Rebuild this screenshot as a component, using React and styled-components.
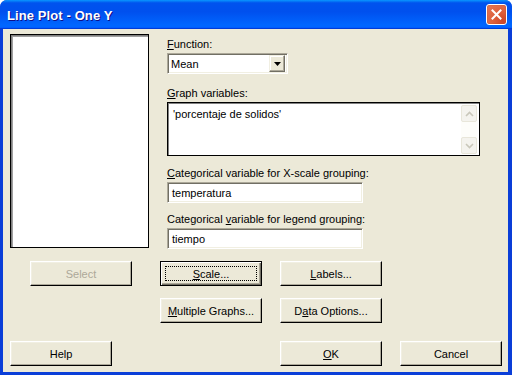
import React from 'react';
import styled, { createGlobalStyle } from 'styled-components';

const GlobalStyle = createGlobalStyle`
  html, body {
    margin: 0;
    padding: 0;
    background: #ffffff;
  }
  body {
    font-family: "Liberation Sans", Arial, sans-serif;
    font-size: 11px;
    color: #000;
  }
`;

const Window = styled.div`
  width: 512px;
  height: 375px;
  box-sizing: border-box;
  display: flex;
  flex-direction: column;
  background: #0a3ed8;
  border-radius: 7px 7px 0 0;
  overflow: hidden;
`;

const TitleBar = styled.div`
  height: 29px;
  flex: none;
  display: flex;
  align-items: center;
  justify-content: space-between;
  padding: 0 5px 0 7px;
  background: linear-gradient(180deg, #0997ff 0%, #0053ee 10%, #0050ee 40%, #0066ff 86%, #0066ff 92%, #005bff 95%, #003dd7 97%, #003dd7 100%);
`;

const Title = styled.span`
  font-family: "Liberation Sans", Arial, sans-serif;
  font-weight: bold;
  font-size: 13px;
  color: #ffffff;
  text-shadow: 1px 1px #0f1089;
  letter-spacing: 0.1px;
  margin-top: 1px;
`;

const CloseButton = styled.div`
  width: 19px;
  height: 19px;
  border: 1px solid #ffffff;
  border-radius: 3px;
  display: flex;
  align-items: center;
  justify-content: center;
  background: radial-gradient(circle at 85% 85%, #cc4628 0%, #dd5e3a 40%, #e37a58 100%);
  box-shadow: inset 0 0 1px #8e2a10;
`;

const Client = styled.div`
  flex: 1;
  margin: 0 4px 3px 3px;
  background: #ece9d8;
  padding: 5px 0 0 7px;
  display: flex;
  flex-direction: column;
`;

const Top = styled.div`
  display: flex;
  gap: 18px;
`;

const ListBox = styled.div`
  width: 139px;
  height: 214px;
  box-sizing: border-box;
  background: #fff;
  border: 1px solid #000;
  box-shadow: inset 1px 1px 0 #808080, inset 2px 2px 0 #a0a0a0;
`;

const Fields = styled.div`
  display: flex;
  flex-direction: column;
  padding-top: 4px;
`;

const Label = styled.div`
  height: 13px;
  line-height: 13px;
  margin-top: ${p => p.$mt || 0}px;
  margin-bottom: 2px;
  white-space: nowrap;
`;

const Key = styled.span`
  text-decoration: underline;
  text-underline-offset: 1px;
`;

const Sunken = styled.div`
  box-sizing: border-box;
  background: #fff;
  border-style: solid;
  border-width: 1px;
  border-color: #aca899 #ffffff #ffffff #aca899;
  box-shadow: inset 1px 1px 0 #716f64, inset -1px -1px 0 #f1efe2;
`;

const Select = styled(Sunken)`
  width: 121px;
  height: 21px;
  display: flex;
  align-items: center;
  justify-content: space-between;
  padding: 0 2px 0 3px;
`;

const ArrowBtn = styled.div`
  width: 16px;
  height: 17px;
  box-sizing: border-box;
  background: #ece9d8;
  border-style: solid;
  border-width: 1px;
  border-color: #f1efe2 #716f64 #716f64 #f1efe2;
  box-shadow: inset -1px -1px 0 #aca899, inset 1px 1px 0 #ffffff;
  display: flex;
  align-items: center;
  justify-content: center;
`;

const TextArea = styled.div`
  width: 313px;
  height: 54px;
  box-sizing: border-box;
  background: #fff;
  border: 1px solid #000;
  box-shadow: inset 1px 1px 0 #808080;
  display: flex;
  justify-content: space-between;
  padding: 2px 2px 1px 5px;
`;

const AreaText = styled.div`
  padding-top: 3px;
  line-height: 13px;
`;

const ScrollBar = styled.div`
  width: 16px;
  display: flex;
  flex-direction: column;
  justify-content: space-between;
  background: #fdfdfa;
`;

const ScrollBtn = styled.div`
  width: 16px;
  height: 17px;
  box-sizing: border-box;
  border: 1px solid #e8e6da;
  border-radius: 2px;
  background: #f4f3ee;
  display: flex;
  align-items: center;
  justify-content: center;
`;

const Input = styled(Sunken)`
  width: 196px;
  height: 21px;
  padding: 0 4px;
  display: flex;
  align-items: center;
`;

const ButtonRow = styled.div`
  display: flex;
  margin-top: ${p => p.$mt}px;
`;

const Button = styled.div`
  width: 102px;
  height: 25px;
  margin-left: ${p => p.$ml || 0}px;
  box-sizing: border-box;
  display: flex;
  align-items: center;
  justify-content: center;
  background: #ece9d8;
  color: ${p => (p.$disabled ? '#aca899' : '#000')};
  border-style: solid;
  border-width: 1px;
  border-color: ${p => (p.$default ? '#000' : '#ffffff #000 #000 #ffffff')};
  box-shadow: ${p =>
    p.$default
      ? 'inset 1px 1px 0 #ffffff, inset -1px -1px 0 #716f64, inset -2px -2px 0 #aca899'
      : 'inset -1px -1px 0 #aca899, inset 1px 1px 0 #f1efe2'};
  position: relative;
`;

const Focus = styled.span`
  position: absolute;
  left: 4px;
  right: 4px;
  top: 4px;
  bottom: 4px;
  border: 1px dotted #000;
`;

const Chevron = ({ up }) => (
  <svg width="9" height="6" viewBox="0 0 9 6">
    <path
      d={up ? 'M1 5 L4.5 1.5 L8 5' : 'M1 1 L4.5 4.5 L8 1'}
      fill="none"
      stroke="#c9c7ba"
      strokeWidth="1.6"
    />
  </svg>
);

export default function App() {
  return (
    <>
      <GlobalStyle />
      <Window>
        <TitleBar>
          <Title>Line Plot - One Y</Title>
          <CloseButton>
            <svg width="11" height="11" viewBox="0 0 11 11">
              <path d="M1.5 1.5 L9.5 9.5 M9.5 1.5 L1.5 9.5" stroke="#fff" strokeWidth="2" strokeLinecap="square" />
            </svg>
          </CloseButton>
        </TitleBar>
        <Client>
          <Top>
            <ListBox />
            <Fields>
              <Label><Key>F</Key>unction:</Label>
              <Select>
                <span>Mean</span>
                <ArrowBtn>
                  <svg width="7" height="4" viewBox="0 0 7 4">
                    <path d="M0 0 H7 L3.5 4 Z" fill="#000" />
                  </svg>
                </ArrowBtn>
              </Select>
              <Label $mt={13}><Key>G</Key>raph variables:</Label>
              <TextArea>
                <AreaText>'porcentaje de solidos'</AreaText>
                <ScrollBar>
                  <ScrollBtn><Chevron up /></ScrollBtn>
                  <ScrollBtn><Chevron /></ScrollBtn>
                </ScrollBar>
              </TextArea>
              <Label $mt={11}><Key>C</Key>ategorical variable for X-scale grouping:</Label>
              <Input>temperatura</Input>
              <Label $mt={10}>Categorical <Key>v</Key>ariable for legend grouping:</Label>
              <Input>tiempo</Input>
            </Fields>
          </Top>
          <ButtonRow $mt={12}>
            <Button $disabled $ml={20}>Select</Button>
            <Button $default $ml={28}>
              <Focus />
              <span><Key>S</Key>cale...</span>
            </Button>
            <Button $ml={18}><span><Key>L</Key>abels...</span></Button>
          </ButtonRow>
          <ButtonRow $mt={12}>
            <Button $ml={150}><span><Key>M</Key>ultiple Graphs...</span></Button>
            <Button $ml={18}><span>D<Key>a</Key>ta Options...</span></Button>
          </ButtonRow>
          <ButtonRow $mt={18}>
            <Button>Help</Button>
            <Button $ml={168}><span><Key>O</Key>K</span></Button>
            <Button $ml={18}>Cancel</Button>
          </ButtonRow>
        </Client>
      </Window>
    </>
  );
}
